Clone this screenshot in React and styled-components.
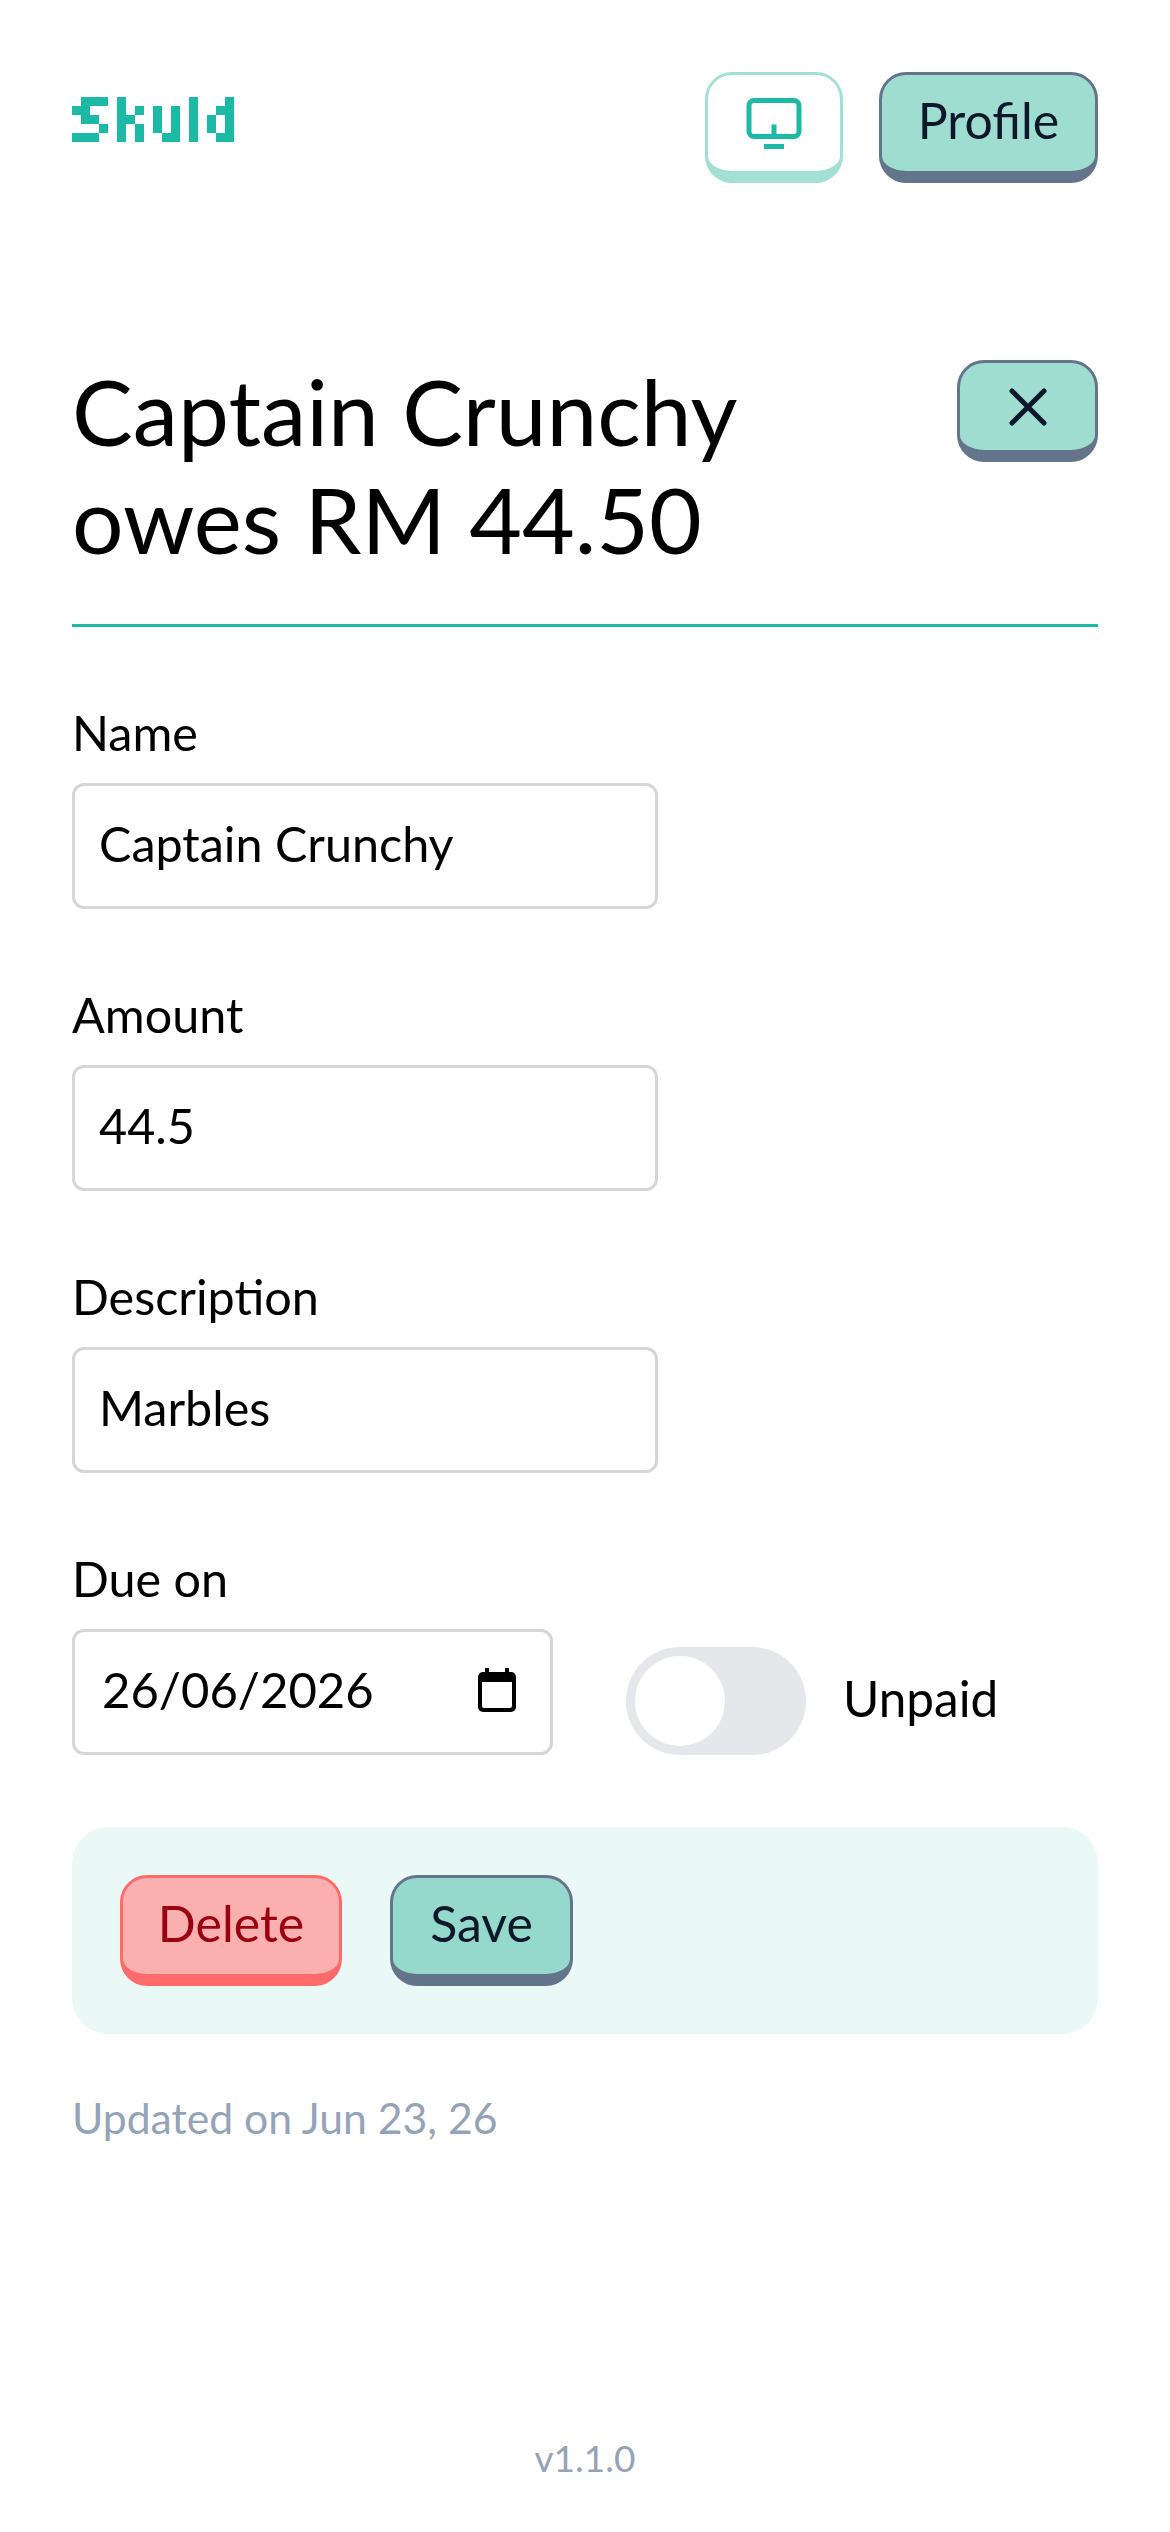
import styled, { createGlobalStyle } from "styled-components";

const TEAL = "#1cb9a4";

const GlobalStyle = createGlobalStyle`
  * { box-sizing: border-box; }
  html, body { margin: 0; padding: 0; background: #fff; }
  body { font-family: Lato, "Open Sans", sans-serif; color: #000; }
`;

const LOGO = [
  [1, 0, 3], [0, 1, 2], [1, 2, 2], [3, 3, 1], [0, 4, 3],
  [5, 0, 1], [5, 1, 1], [7, 1, 1], [5, 2, 2], [5, 3, 1], [7, 3, 1], [5, 4, 1], [7, 4, 1],
  [9, 1, 1], [11, 1, 1], [9, 2, 1], [11, 2, 1], [9, 3, 1], [11, 3, 1], [10, 4, 2],
  [13, 0, 1], [13, 1, 1], [13, 2, 1], [13, 3, 1], [13, 4, 1],
  [17, 0, 1], [16, 1, 2], [15, 2, 1], [17, 2, 1], [15, 3, 1], [17, 3, 1], [16, 4, 2],
];

const Logo = () => (
  <LogoMark width="162" height="45" viewBox="0 0 18 5" shapeRendering="crispEdges" aria-label="Skuld">
    {LOGO.map(([x, y, w]) => (
      <rect key={`${x}-${y}`} x={x} y={y} width={w} height="1" fill={TEAL} />
    ))}
  </LogoMark>
);

const LogoMark = styled.svg`
  margin-top: 25px;
`;

const Page = styled.div`
  width: 1170px;
  height: 2532px;
  padding: 72px 72px 0;
  display: flex;
  flex-direction: column;
`;

const Header = styled.header`
  display: flex;
  justify-content: space-between;
  align-items: flex-start;
  height: 111px;
`;

const Nav = styled.nav`
  display: flex;
  gap: 36px;
`;

const KeyButton = styled.button`
  height: ${(p) => p.$h || 111}px;
  width: ${(p) => p.$w}px;
  padding: 0 0 ${(p) => (p.$icon ? 0 : 6)}px;
  display: flex;
  align-items: center;
  justify-content: center;
  border-radius: 27px;
  border: 3px solid ${(p) => p.$edge};
  border-bottom-width: 12px;
  background: ${(p) => p.$fill};
  color: ${(p) => p.$ink};
  font-family: inherit;
  font-size: 50px;
  line-height: 72px;
`;

const TitleRow = styled.div`
  margin-top: 177px;
  display: flex;
  justify-content: space-between;
  align-items: flex-start;
`;

const Title = styled.h1`
  margin: -3px 0 0;
  font-size: 91px;
  font-weight: 400;
  line-height: 108px;
  width: 800px;
`;

const Divider = styled.hr`
  margin: 51px 0 0;
  border: 0;
  height: 3px;
  background: ${TEAL};
`;

const Form = styled.form`
  margin-top: 72px;
  display: flex;
  flex-direction: column;
  gap: 72px;
`;

const Field = styled.div`
  display: flex;
  flex-direction: column;
`;

const Label = styled.label`
  font-size: 48.5px;
  line-height: 66px;
  height: 84px;
`;

const Input = styled.input`
  width: 586px;
  height: 126px;
  padding: 0 24px 6px;
  border: 3px solid #d4d6d8;
  border-radius: 12px;
  background: #fff;
  color: #000;
  font-family: inherit;
  font-size: 48.5px;
  outline: none;
`;

const DueRow = styled.div`
  display: flex;
  align-items: flex-end;
`;

const DateBox = styled.div`
  position: relative;
  width: 481px;
`;

const DateInput = styled(Input)`
  width: 100%;
  padding-left: 27px;
  font-size: 49px;
`;

const CalendarIcon = styled.svg`
  position: absolute;
  top: 39px;
  right: 37px;
`;

const Toggle = styled.span`
  margin-left: 73px;
  width: 180px;
  height: 108px;
  padding: 9px;
  border-radius: 54px;
  background: #e5e7eb;
  display: block;
`;

const Knob = styled.span`
  display: block;
  width: 90px;
  height: 90px;
  border-radius: 50%;
  background: #fff;
`;

const ToggleText = styled.span`
  margin-left: 37px;
  height: 108px;
  font-size: 49.5px;
  line-height: 102px;
`;

const Actions = styled.div`
  padding: 48px;
  display: flex;
  gap: 48px;
  background: #ebf9f6;
  border-radius: 36px;
`;

const Updated = styled.p`
  margin: 54px 0 0;
  font-size: 42.7px;
  line-height: 60px;
  color: #94a3b8;
`;

const Version = styled.footer`
  margin-top: auto;
  margin-bottom: 47px;
  text-align: center;
  font-size: 37px;
  line-height: 54px;
  color: #94a3b8;
`;

const App = () => {
  return (
    <Page>
      <GlobalStyle />
      <Header>
        <Logo />
        <Nav>
          <KeyButton type="button" $icon $w={138} $edge="#a3e0d4" $fill="#fff" $ink={TEAL} aria-label="Theme">
            <svg width="60" height="60" viewBox="0 -2.5 60 60" fill="none" stroke={TEAL} strokeWidth="5">
              <rect x="5" y="5" width="50" height="36" rx="5" />
              <path d="M30 29V41" />
              <path d="M20 51H40" />
            </svg>
          </KeyButton>
          <KeyButton type="button" $w={219} $edge="#64748b" $fill="#a0ddd1" $ink="#0f172a">Profile</KeyButton>
        </Nav>
      </Header>

      <TitleRow>
        <Title>Captain Crunchy owes RM 44.50</Title>
        <KeyButton type="button" $icon $w={141} $h={102} $edge="#64748b" $fill="#a0ddd1" $ink="#0f172a" aria-label="Close">
          <svg width="42" height="42" viewBox="0 0 42 42" fill="none" stroke="#0f172a" strokeWidth="5" strokeLinecap="round">
            <path d="M5 5L37 37M37 5L5 37" />
          </svg>
        </KeyButton>
      </TitleRow>
      <Divider />

      <Form>
        <Field>
          <Label>Name</Label>
          <Input defaultValue="Captain Crunchy" />
        </Field>
        <Field>
          <Label>Amount</Label>
          <Input defaultValue="44.5" />
        </Field>
        <Field>
          <Label>Description</Label>
          <Input defaultValue="Marbles" />
        </Field>
        <Field>
          <Label>Due on</Label>
          <DueRow>
            <DateBox>
              <DateInput type="text" defaultValue="26/06/2026" />
              <CalendarIcon width="38" height="44" viewBox="0 0 38 44" fill="#000">
                <rect x="7" y="0" width="4" height="8" />
                <rect x="27" y="0" width="4" height="8" />
                <path fillRule="evenodd" d="M5 4H33A5 5 0 0 1 38 9V39A5 5 0 0 1 33 44H5A5 5 0 0 1 0 39V9A5 5 0 0 1 5 4ZM4 14V38A2 2 0 0 0 6 40H32A2 2 0 0 0 34 38V14Z" />
              </CalendarIcon>
            </DateBox>
            <Toggle><Knob /></Toggle>
            <ToggleText>Unpaid</ToggleText>
          </DueRow>
        </Field>
        <Actions>
          <KeyButton type="button" $w={222} $edge="#ff6b6b" $fill="#fbb0b0" $ink="#9b0011">Delete</KeyButton>
          <KeyButton type="button" $w={183} $edge="#64748b" $fill="#94d9cc" $ink="#0f172a">Save</KeyButton>
        </Actions>
      </Form>

      <Updated>Updated on Jun 23, 26</Updated>
      <Version>v1.1.0</Version>
    </Page>
  );
};

export default App;
